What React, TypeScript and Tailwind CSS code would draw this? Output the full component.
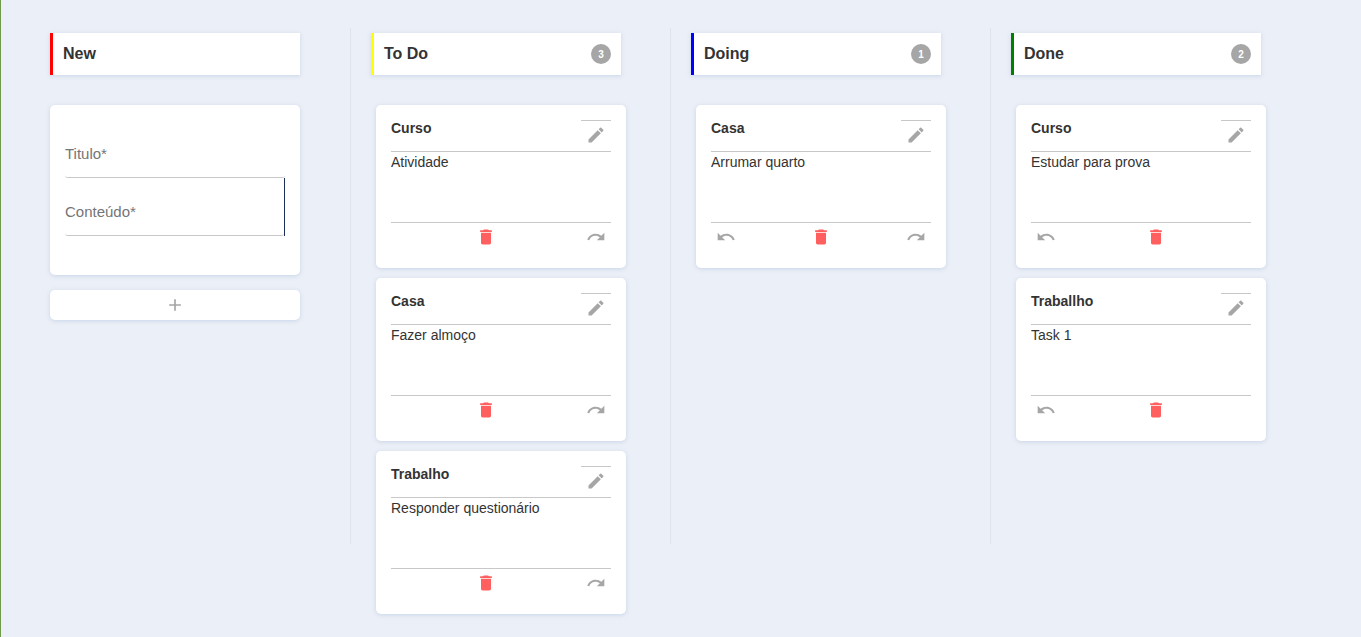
import React from "react";
import { MdAdd, MdDelete, MdEdit, MdRedo, MdUndo } from "react-icons/md";

type Task = { title: string; content: string };
type ColumnData = {
  name: string;
  accent: string;
  tasks: Task[];
  canUndo: boolean;
  canRedo: boolean;
};

const columns: ColumnData[] = [
  {
    name: "To Do",
    accent: "border-[#ffff00]",
    canUndo: false,
    canRedo: true,
    tasks: [
      { title: "Curso", content: "Atividade" },
      { title: "Casa", content: "Fazer almoço" },
      { title: "Trabalho", content: "Responder questionário" },
    ],
  },
  {
    name: "Doing",
    accent: "border-[#0000ff]",
    canUndo: true,
    canRedo: true,
    tasks: [{ title: "Casa", content: "Arrumar quarto" }],
  },
  {
    name: "Done",
    accent: "border-[#008000]",
    canUndo: true,
    canRedo: false,
    tasks: [
      { title: "Curso", content: "Estudar para prova" },
      { title: "Traballho", content: "Task 1" },
    ],
  },
];

const iconButton = "flex h-[30px] w-[30px] items-center justify-center pb-0.5";
const shadow = "shadow-[0_1px_4px_0_rgba(192,208,230,0.8)]";

function Header({ name, accent, count }: { name: string; accent: string; count?: number }) {
  return (
    <header
      className={`flex h-[42px] w-[250px] items-center justify-between border-l-[3px] bg-white px-2.5 ${accent} ${shadow}`}
    >
      <h2 className="text-base leading-[18px] font-bold">{name}</h2>
      {count !== undefined && (
        <span className="flex h-5 w-5 items-center justify-center rounded-full bg-[#a6a6a6] pt-px text-[10px] leading-none font-bold text-white">
          {count}
        </span>
      )}
    </header>
  );
}

function Card({ task, canUndo, canRedo }: { task: Task; canUndo: boolean; canRedo: boolean }) {
  return (
    <article className={`h-[163px] w-[250px] rounded-[5px] bg-white p-[15px] text-sm ${shadow}`}>
      <div className="flex h-8 justify-between border-b border-[#c8c8c8]">
        <h3 className="leading-4 font-bold">{task.title}</h3>
        <button className={`${iconButton} border-t border-[#c8c8c8] text-[#a6a6a6]`} aria-label="Editar">
          <MdEdit size={20} />
        </button>
      </div>
      <p className="h-[70px] pt-0.5 leading-4">{task.content}</p>
      <div className="flex justify-between border-t border-[#c8c8c8]">
        {canUndo ? (
          <button className={`${iconButton} text-[#a6a6a6]`} aria-label="Voltar">
            <MdUndo size={20} />
          </button>
        ) : (
          <span />
        )}
        <button className={`${iconButton} text-[#ff5f5f]`} aria-label="Excluir">
          <MdDelete size={20} />
        </button>
        {canRedo ? (
          <button className={`${iconButton} text-[#a6a6a6]`} aria-label="Avançar">
            <MdRedo size={20} />
          </button>
        ) : (
          <span />
        )}
      </div>
    </article>
  );
}

export default function App() {
  return (
    <main className="flex h-[637px] items-start overflow-hidden border-l border-[#6f9a4c] bg-[#ebeff7] pt-7 pl-[49px] font-['Liberation_Sans',Arial,sans-serif] text-[#333333]">
      <section className="w-[300px] shrink-0 pt-[5px]">
        <Header name="New" accent="border-[#ff0000]" />
        <form className={`mt-[30px] h-[170px] w-[250px] rounded-[5px] bg-white p-[15px] ${shadow}`}>
          <input
            className="block h-[58px] w-[220px] rounded-[3px] border-b border-[#c8c8c8] pt-2.5 text-[15px] outline-none placeholder:text-[#757575]"
            placeholder="Titulo*"
          />
          <div className="flex h-[58px] w-[220px] border-r border-[#1c2f57]">
            <input
              className="block w-full rounded-[3px] border-b border-[#c8c8c8] pt-3 text-[15px] outline-none placeholder:text-[#757575]"
              placeholder="Conteúdo*"
            />
          </div>
        </form>
        <button
          className={`mt-[15px] flex h-[30px] w-[250px] items-center justify-center rounded-[5px] bg-white text-[#a6a6a6] ${shadow}`}
          aria-label="Adicionar"
        >
          <MdAdd size={20} />
        </button>
      </section>
      {columns.map((column) => (
        <section
          key={column.name}
          className="h-[516px] w-[320px] shrink-0 border-l border-[#dfe4ed] pt-[5px] pl-5"
        >
          <Header name={column.name} accent={column.accent} count={column.tasks.length} />
          <div className="mt-[30px] flex flex-col gap-2.5 pl-[5px]">
            {column.tasks.map((task) => (
              <Card key={task.title} task={task} canUndo={column.canUndo} canRedo={column.canRedo} />
            ))}
          </div>
        </section>
      ))}
    </main>
  );
}
